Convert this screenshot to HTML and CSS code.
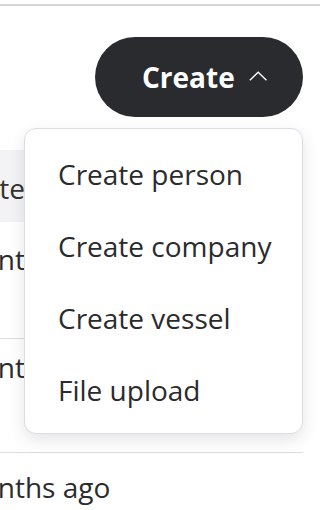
FILE: index.html
```html
<!DOCTYPE html>
<html lang="en">
<head>
    <meta charset="UTF-8">
    <meta name="viewport" content="width=device-width, initial-scale=1.0">
    <title>Records</title>
    <link rel="stylesheet" href="styles.css">
</head>
<body>

<div class="topbar"></div>

<div class="toolbar">
    <button class="create-button">
        <span>Create</span>
        <svg class="chevron" width="22" height="12" viewBox="0 0 22 12">
            <polyline points="1,11 11,1.5 21,11" fill="none" stroke="#fff" stroke-width="1.6" />
        </svg>
    </button>

    <div class="create-menu">
        <div class="menu-item">Create person</div>
        <div class="menu-item">Create company</div>
        <div class="menu-item">Create vessel</div>
        <div class="menu-item">File upload</div>
    </div>
</div>

<div class="records">
    <div class="records-head">
        <div class="cell-clip"><span class="cell cell-created">Created</span></div>
    </div>
    <div class="record record-first">
        <div class="cell-clip"><span class="cell cell-months">months ago</span></div>
    </div>
    <div class="record record-second">
        <div class="cell-clip"><span class="cell cell-months">months ago</span></div>
    </div>
    <div class="record record-last">
        <span class="cell cell-months">months ago</span>
    </div>
</div>

</body>
</html>
```

FILE: styles.css
```css
body {
    font-family: 'Open Sans', 'Noto Sans', sans-serif;
    margin: 0;
    padding: 0;
    width: 320px;
    height: 510px;
    overflow: hidden;
    background: #fff;
    color: #2b2b2d;
}

.topbar {
    height: 4px;
    border-bottom: 2px solid #d3d4d9;
}

.toolbar {
    position: relative;
    display: flex;
    justify-content: flex-end;
    padding: 31px 17px 0 0;
}

.create-button {
    display: flex;
    align-items: center;
    gap: 14px;
    height: 80px;
    width: 208px;
    padding: 0 36px 0 47px;
    border: none;
    border-radius: 40px;
    background: #2a2b2e;
    color: #fff;
    font-family: 'Open Sans', 'Noto Sans', sans-serif;
    font-size: 28px;
    font-weight: 700;
    cursor: pointer;
}

.chevron {
    display: block;
    margin-top: -2px;
}

/* dropdown sits over the table */
.create-menu {
    position: absolute;
    top: 122px;
    left: 24px;
    width: 277px;
    padding: 9px 0 7px;
    background: #fff;
    border: 1px solid #dcdde3;
    border-radius: 12px;
    box-shadow: 0 6px 16px rgba(40, 42, 60, 0.12);
    z-index: 2;
}

.menu-item {
    height: 72px;
    line-height: 72px;
    padding-left: 33px;
    font-size: 28px;
    color: #2b2b2d;
}

.records {
    margin: 33px 17px 0 0;
    overflow: hidden;
    font-size: 28px;
    line-height: 40px;
}

.records-head {
    height: 72px;
    padding-top: 18px;
    box-sizing: border-box;
    background: #f3f3f5;
    color: #333;
}

.record {
    box-sizing: border-box;
    border-bottom: 1px solid #dcdde2;
}

.record-first {
    height: 117px;
    padding-top: 17px;
}

.record-second {
    height: 114px;
    padding-top: 8px;
}

.record-last {
    padding-top: 14px;
    border-bottom: none;
}

/* the rest of each row is hidden under the menu */
.cell-clip {
    width: 24px;
    overflow: hidden;
}

.cell {
    display: block;
    white-space: nowrap;
}

.cell-created {
    margin-left: -61px;
}

.cell-months {
    margin-left: -45px;
}
```
